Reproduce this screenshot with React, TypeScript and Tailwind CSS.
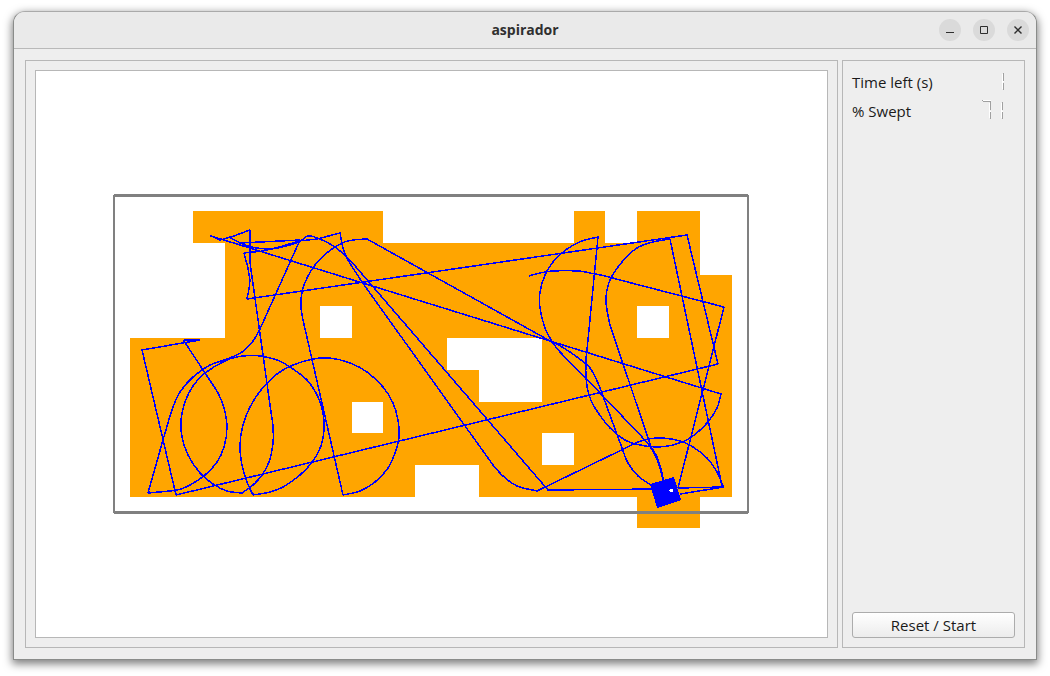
import React from "react";

type Point = [number, number];

// Rounded stretches of the robot's trail, interpolated smoothly through their points.
const curves: Point[][] = [
  [[529, 276], [540, 273], [553, 271], [578, 271], [590, 273], [605, 276], [616, 279]],
  [[670, 239], [653, 242], [637, 248], [622, 262], [610, 280], [606, 297], [607, 310], [610, 325]],
  [[651, 447], [657, 457], [662, 473], [663, 480]],
  [[643, 438], [649, 445], [655, 455], [660, 468], [663, 480]],
  [[598, 237], [582, 241], [567, 249], [553, 262], [545, 275], [540, 292], [540, 308], [545, 328], [553, 343], [560, 352]],
  [[587, 350], [586, 360], [586, 378], [589, 395], [595, 408], [610, 428], [625, 440], [640, 445], [657, 447], [673, 445], [690, 438], [707, 423], [717, 408], [721, 394]],
  [[638, 442], [648, 439], [663, 438], [680, 441], [693, 447], [707, 458], [717, 472], [723, 486]],
  [[552, 342], [562, 347], [577, 357], [590, 368], [598, 383], [603, 396]],
  [[622, 448], [628, 463], [638, 476], [651, 485]],
  [[367, 239], [353, 240], [342, 243], [328, 252], [315, 265], [307, 278], [302, 292], [301, 307], [303, 320]],
  [[343, 495], [360, 491], [375, 482], [388, 468], [395, 453], [399, 437], [398, 420], [393, 403], [383, 387], [367, 372], [350, 363], [330, 358], [313, 359], [293, 365], [277, 374], [261, 390], [250, 407], [243, 425], [240, 445], [242, 465], [247, 482], [253, 495]],
  [[253, 495], [270, 492], [283, 487], [300, 475], [313, 461], [321, 446], [324, 430], [323, 413], [318, 397], [307, 380], [290, 367], [277, 360], [260, 356], [243, 356], [227, 360], [205, 373], [193, 386], [185, 402], [181, 420], [182, 437], [188, 455], [200, 473], [213, 484], [227, 491], [242, 493]],
  [[163, 440], [172, 410], [180, 392], [193, 377], [210, 365], [227, 359], [242, 352], [253, 341], [260, 329]],
  [[148, 493], [177, 490], [190, 485], [205, 475], [217, 462], [224, 447], [227, 427], [224, 408], [218, 393], [205, 373]],
  [[242, 493], [253, 485], [262, 475], [269, 462], [273, 443], [273, 427], [271, 412]],
  [[240, 243], [248, 246], [257, 248], [270, 249], [282, 247], [299, 242], [308, 236], [320, 239], [335, 247], [350, 260]],
  [[340, 233], [343, 248], [348, 260], [362, 282]],
  [[493, 465], [503, 476], [517, 486], [537, 491]],
];

// Stretches driven in a straight line, with sharp turns at the walls.
const lines: Point[][] = [
  [[616, 279], [724, 307], [678, 488], [724, 487], [680, 494]],
  [[722, 486], [670, 239]],
  [[610, 325], [651, 447]],
  [[184, 340], [200, 340], [142, 350], [176, 495], [718, 364], [687, 235], [247, 299], [249, 289], [250, 280], [248, 268], [244, 253], [263, 251], [283, 246], [299, 241], [317, 239], [340, 233]],
  [[560, 352], [602, 395], [643, 438]],
  [[598, 237], [587, 350]],
  [[721, 394], [211, 236], [220, 240], [231, 237], [250, 230], [250, 262], [252, 277], [271, 412]],
  [[537, 491], [638, 442]],
  [[367, 239], [552, 342]],
  [[603, 396], [622, 448]],
  [[303, 320], [343, 495]],
  [[148, 493], [163, 440]],
  [[260, 329], [300, 240], [240, 243], [229, 237]],
  [[205, 373], [184, 341]],
  [[350, 260], [548, 490], [660, 489]],
  [[362, 282], [493, 465]],
];

// Small knots left where the robot bumped into something and turned.
const bumps: Point[] = [
  [211, 236], [299, 240], [250, 231], [340, 233], [598, 237], [687, 235], [723, 307], [717, 364],
  [721, 394], [723, 486], [142, 350], [149, 492], [176, 494], [184, 341], [253, 494], [247, 298],
];

function linePath(points: Point[]): string {
  return points.map(([x, y], i) => `${i === 0 ? "M" : "L"}${x} ${y}`).join("");
}

function curvePath(points: Point[]): string {
  let d = `M${points[0][0]} ${points[0][1]}`;
  for (let i = 0; i < points.length - 1; i++) {
    const before = points[Math.max(i - 1, 0)];
    const from = points[i];
    const to = points[i + 1];
    const after = points[Math.min(i + 2, points.length - 1)];
    d += `C${from[0] + (to[0] - before[0]) / 6} ${from[1] + (to[1] - before[1]) / 6}`;
    d += ` ${to[0] - (after[0] - from[0]) / 6} ${to[1] - (after[1] - from[1]) / 6} ${to[0]} ${to[1]}`;
  }
  return d;
}

function RoomMap() {
  return (
    <svg
      viewBox="36 71 791 566"
      className="block h-full w-full"
      shapeRendering="crispEdges"
      role="img"
      aria-label="Room map"
    >
      <path
        fill="#ffa500"
        fillRule="evenodd"
        d="M193 211H383V243H574V211H605V243H637V211H700V275H732V497H700V528H637V497H479V465H415V497H130V338H225V243H193ZM320 306V338H352V306ZM637 306V338H669V306ZM352 402V433H383V402ZM542 433V465H574V433ZM447 338V370H479V402H542V338Z"
      />
      <path
        fill="#808080"
        d="M114 194H748V195H749V513H748V514H114V513H113V195H114ZM115 197V511H747V197Z"
        fillRule="evenodd"
      />
      <g fill="none" stroke="#0000ff" strokeWidth="1.5" strokeLinejoin="bevel">
        {curves.map((points, i) => (
          <path key={i} d={curvePath(points)} />
        ))}
        {lines.map((points, i) => (
          <path key={i} d={linePath(points)} />
        ))}
      </g>
      {bumps.map(([x, y]) => (
        <rect key={`${x}-${y}`} x={x - 1} y={y - 1} width="2" height="2" fill="#0000ff" />
      ))}
      <path fill="#0000ff" d="M650 484L674 477L681 500L657 508Z" />
      <path fill="#ffffff" d="M670 489H673V492H670V491H669V490H670Z" />
    </svg>
  );
}

function WindowButton({ label, children }: { label: string; children: React.ReactNode }) {
  return (
    <button
      type="button"
      aria-label={label}
      className="flex size-[22px] items-center justify-center rounded-full bg-[#dadada] text-[#2e2e2e]"
    >
      <svg viewBox="0 0 22 22" className="size-[22px]" fill="none" stroke="currentColor">
        {children}
      </svg>
    </button>
  );
}

function Lcd({ seven = false, label }: { seven?: boolean; label: string }) {
  return (
    <svg
      viewBox="0 0 40 24"
      className="h-6 w-10"
      shapeRendering="crispEdges"
      role="img"
      aria-label={label}
    >
      {seven ? (
        <>
          <path fill="#ffffff" d="M8 1H16V2H8ZM14 4H15V12H14ZM14 12H16V13H14ZM14 13H15V19H14Z" />
          <path fill="#a0a0a0" d="M7 1H8V2H9V2H16V11H15V3H8V2H7ZM15 13H16V20H15Z" />
          <path fill="#ffffff" d="M26 4H27V12H28V13H27V19H26Z" />
          <path fill="#a0a0a0" d="M27 3H28V11H27ZM27 13H28V20H27Z" />
        </>
      ) : (
        <>
          <path fill="#ffffff" d="M27 4H28V11H29V12H28V19H27Z" />
          <path fill="#a0a0a0" d="M28 3H29V11H28ZM28 13H29V20H28Z" />
        </>
      )}
    </svg>
  );
}

export default function App() {
  return (
    <div className="flex h-screen bg-white px-[13px] pt-[11px] pb-4 font-['Open_Sans','Noto_Sans',sans-serif] text-[#1a1a1a]">
      <main className="flex min-w-0 flex-1 flex-col overflow-hidden rounded-t-xl border border-[#8a8c8a] border-t-[#aaaaaa] bg-[#eeeeee] shadow-[0_3px_9px_1px_rgba(0,0,0,0.5)]">
        <header className="grid h-[37px] shrink-0 grid-cols-[1fr_auto_1fr] items-center border-b border-[#b9b9b9] bg-[#eaeaea]">
          <span />
          <h1 className="text-sm font-bold text-[#303030]">aspirador</h1>
          <div className="flex justify-end gap-3 pr-[7px]">
            <WindowButton label="Minimize">
              <path d="M7 13.5H15" />
            </WindowButton>
            <WindowButton label="Maximize">
              <path d="M7.500 7.500H14.500V14.500H7.500Z" />
            </WindowButton>
            <WindowButton label="Close">
              <path d="M7.500 7.500L14.500 14.500M14.500 7.500L7.500 14.500" strokeWidth="1.400" />
            </WindowButton>
          </div>
        </header>
        <div className="flex min-h-0 flex-1 gap-1 p-[11px]">
          <section className="min-w-0 flex-1 border border-[#b7b7b7] p-[9px]">
            <div className="h-full border border-[#b7b7b7] bg-white">
              <RoomMap />
            </div>
          </section>
          <aside className="flex w-[183px] shrink-0 flex-col border border-[#b7b7b7] p-[9px]">
            <div className="flex flex-col gap-[5px] text-[15px]">
              <div className="flex h-6 items-center justify-between">
                <span>Time left (s)</span>
                <Lcd label="1" />
              </div>
              <div className="flex h-6 items-center justify-between">
                <span>% Swept</span>
                <Lcd label="71" seven />
              </div>
            </div>
            <button
              type="button"
              className="mt-auto h-[26px] rounded-[3px] border border-[#acacac] bg-linear-to-b from-white to-[#ececec] text-[15px] leading-6"
            >
              Reset / Start
            </button>
          </aside>
        </div>
      </main>
    </div>
  );
}
